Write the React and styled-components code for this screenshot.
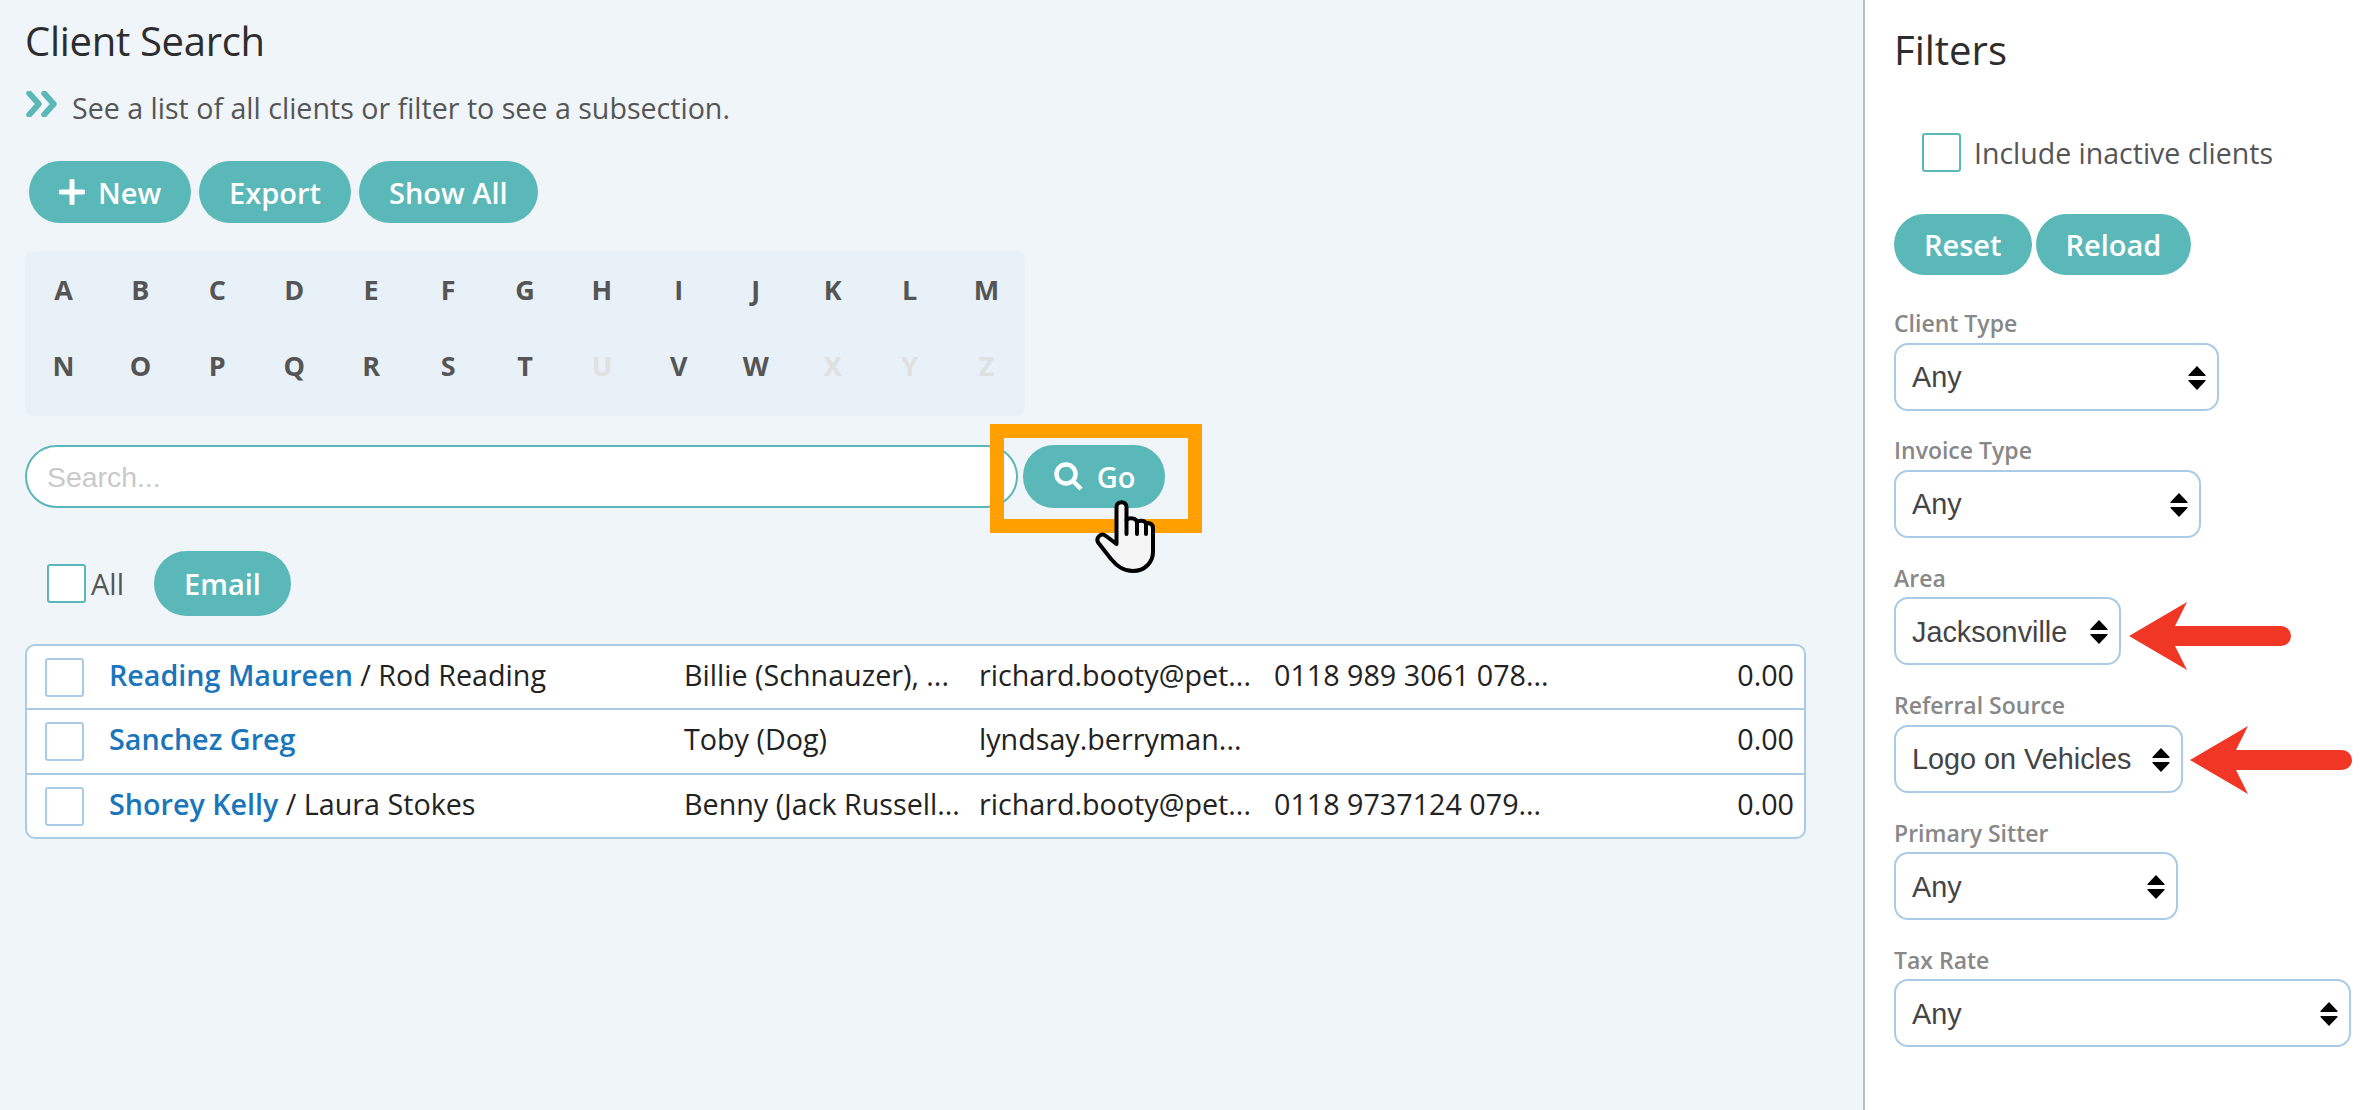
import React from 'react';
import styled, { createGlobalStyle } from 'styled-components';

const teal = '#5bb8b8';
const line = '#a9cbe6';

const alphabet = [
  ['A'], ['B'], ['C'], ['D'], ['E'], ['F'], ['G'], ['H'], ['I'], ['J'], ['K'], ['L'], ['M'],
  ['N'], ['O'], ['P'], ['Q'], ['R'], ['S'], ['T'], ['U', true], ['V'], ['W'], ['X', true], ['Y', true], ['Z', true],
];

const clients = [
  { id: 1, name: 'Reading Maureen', partner: 'Rod Reading', pets: 'Billie (Schnauzer), ...', email: 'richard.booty@pet...', phone: '0118 989 3061 078...' },
  { id: 2, name: 'Sanchez Greg', pets: 'Toby (Dog)', email: 'lyndsay.berryman...', phone: '' },
  { id: 3, name: 'Shorey Kelly', partner: 'Laura Stokes', pets: 'Benny (Jack Russell...', email: 'richard.booty@pet...', phone: '0118 9737124 079...' },
];

const filters = [
  { label: 'Client Type', value: 'Any', width: 325 },
  { label: 'Invoice Type', value: 'Any', width: 307 },
  { label: 'Area', value: 'Jacksonville', width: 227, arrow: { left: 10, top: 3 } },
  { label: 'Referral Source', value: 'Logo on Vehicles', width: 289, arrow: { left: 9, top: -1 } },
  { label: 'Primary Sitter', value: 'Any', width: 284 },
  { label: 'Tax Rate', value: 'Any', width: 457 },
];

function SelectArrows() {
  return (
    <ArrowsIcon viewBox="0 0 18 26">
      <path d="M9 1 L17.5 10 Q18 11 17 11 L1 11 Q0 11 .5 10 Z" />
      <path d="M9 25 L17.5 16 Q18 15 17 15 L1 15 Q0 15 .5 16 Z" />
    </ArrowsIcon>
  );
}

function RedArrow({ left, top }) {
  return (
    <RedArrowIcon $left={left} $top={top} viewBox="0 0 163 68">
      <path d="M0 34 L58 0 L46 24 L152 24 A10 10 0 0 1 152 44 L46 44 L58 68 Z" />
    </RedArrowIcon>
  );
}

function App() {
  return (
    <>
      <GlobalStyle />
      <Page>
        <Main>
          <Title>Client Search</Title>
          <Intro>
            <ChevronIcon viewBox="0 0 30 24">
              <path d="M3 2 L12 12 L3 22" />
              <path d="M17 2 L26 12 L17 22" />
            </ChevronIcon>
            See a list of all clients or filter to see a subsection.
          </Intro>
          <Toolbar>
            <Button>
              <PlusIcon viewBox="0 0 26 26">
                <path d="M13 2 V24 M2 13 H24" />
              </PlusIcon>
              New
            </Button>
            <Button>Export</Button>
            <Button>Show All</Button>
          </Toolbar>
          <Alphabet>
            {alphabet.map(([letter, disabled]) => (
              <Letter key={letter} $disabled={disabled}>{letter}</Letter>
            ))}
          </Alphabet>
          <SearchRow>
            <SearchInput placeholder="Search..." />
            <GoWrap>
              <Highlight />
              <GoButton>
                <SearchIcon viewBox="0 0 32 32">
                  <circle cx="13" cy="13" r="9.5" />
                  <path d="M20 20 L28 28" />
                </SearchIcon>
                Go
              </GoButton>
              <HandIcon viewBox="0 0 60 76">
                <path d="M21.5 46 V9 C21.5 2.5 31.5 2.5 31.5 9 V22 C34 19.5 41 19.5 42 24 C44 22 50 22 51 25.5 C53 24.5 58 25.5 58 30 V54 C58 64 50 73 38 73 C28 73 22 68 16 61 L3.5 45 C0 40 6 34 11 38 Z" />
                <path d="M31.5 22 V36 M42 24 V36 M51 25.5 V36" />
              </HandIcon>
            </GoWrap>
          </SearchRow>
          <SelectRow>
            <TealCheck type="checkbox" />
            <AllLabel>All</AllLabel>
            <EmailButton>Email</EmailButton>
          </SelectRow>
          <ClientList>
            {clients.map((client) => (
              <ClientRow key={client.id}>
                <RowCheck type="checkbox" />
                <Cell>
                  <ClientName>{client.name}</ClientName>
                  {client.partner && ` / ${client.partner}`}
                </Cell>
                <Cell>{client.pets}</Cell>
                <Cell>{client.email}</Cell>
                <Cell>{client.phone}</Cell>
                <Amount>0.00</Amount>
              </ClientRow>
            ))}
          </ClientList>
        </Main>
        <Sidebar>
          <SideTitle>Filters</SideTitle>
          <InactiveRow>
            <TealCheck type="checkbox" />
            Include inactive clients
          </InactiveRow>
          <SideButtons>
            <SideButton>Reset</SideButton>
            <SideButton>Reload</SideButton>
          </SideButtons>
          {filters.map((filter) => (
            <Field key={filter.label}>
              <FieldLabel>{filter.label}</FieldLabel>
              <SelectBox $width={filter.width}>
                {filter.value}
                <SelectArrows />
                {filter.arrow && <RedArrow {...filter.arrow} />}
              </SelectBox>
            </Field>
          ))}
        </Sidebar>
      </Page>
    </>
  );
}

const GlobalStyle = createGlobalStyle`
  html, body {
    margin: 0;
    padding: 0;
  }
  body {
    font-family: 'Open Sans', 'Liberation Sans', sans-serif;
    background-color: #f0f5fa;
    color: #222;
  }
  * {
    box-sizing: border-box;
  }
`;

const Page = styled.div`
  display: flex;
  width: 2368px;
  height: 1110px;
  overflow: hidden;
`;

const Main = styled.div`
  width: 1863px;
  flex-shrink: 0;
  display: flex;
  flex-direction: column;
  align-items: flex-start;
  padding-top: 16px;
  background-color: #f0f5fa;
`;

const Title = styled.h1`
  margin: 0 0 0 25px;
  font-size: 40px;
  line-height: 50px;
  font-weight: 400;
  letter-spacing: -0.3px;
  color: #2d2d2d;
`;

const Intro = styled.div`
  display: flex;
  align-items: center;
  margin: 20px 0 0 26px;
  height: 42px;
  font-size: 28.6px;
  color: #555;
`;

const ChevronIcon = styled.svg`
  width: 32px;
  height: 26px;
  margin-right: 14px;
  margin-top: -7px;
  fill: none;
  stroke: ${teal};
  stroke-width: 5.5;
  stroke-linecap: round;
  stroke-linejoin: round;
`;

const Toolbar = styled.div`
  display: flex;
  gap: 8px;
  margin: 33px 0 0 29px;
`;

const Button = styled.button`
  display: inline-flex;
  align-items: center;
  justify-content: center;
  height: 62px;
  padding: 0 30px;
  border: none;
  border-radius: 31px;
  background-color: ${teal};
  color: #fff;
  font-family: inherit;
  font-size: 29px;
  font-weight: 600;
  white-space: nowrap;
`;

const PlusIcon = styled.svg`
  width: 26px;
  height: 26px;
  margin-right: 13px;
  fill: none;
  stroke: #fff;
  stroke-width: 5;
  stroke-linecap: round;
`;

const Alphabet = styled.div`
  display: grid;
  grid-template-columns: repeat(13, 1fr);
  grid-auto-rows: 76px;
  width: 1000px;
  height: 165px;
  margin: 28px 0 0 25px;
  border-radius: 8px;
  background-color: #e9f1f8;
`;

const Letter = styled.div`
  display: flex;
  align-items: center;
  justify-content: center;
  font-size: 27px;
  font-weight: 700;
  color: ${({ $disabled }) => ($disabled ? '#dfe0e0' : '#555')};
`;

const SearchRow = styled.div`
  display: flex;
  margin: 29px 0 0 25px;
`;

const SearchInput = styled.input`
  width: 993px;
  height: 63px;
  padding: 1px 20px 0;
  border: 2px solid ${teal};
  border-radius: 32px;
  background-color: #fff;
  font-family: 'Liberation Sans', sans-serif;
  font-size: 28.4px;
  outline: none;
  &::placeholder {
    color: #c9c9c9;
  }
`;

const GoWrap = styled.div`
  position: relative;
  margin-left: 5px;
`;

const Highlight = styled.div`
  position: absolute;
  top: -21px;
  left: -33px;
  right: -37px;
  bottom: -25px;
  border-style: solid;
  border-width: 14px;
  border-color: #ffa000;
`;

const GoButton = styled(Button)`
  position: relative;
  width: 142px;
  height: 63px;
  padding: 0;
`;

const SearchIcon = styled.svg`
  width: 32px;
  height: 32px;
  margin-right: 12px;
  fill: none;
  stroke: #fff;
  stroke-width: 4.5;
`;

const HandIcon = styled.svg`
  position: absolute;
  left: 72px;
  top: 53px;
  width: 60px;
  height: 76px;
  fill: #f5f5f5;
  stroke: #000;
  stroke-width: 4;
  stroke-linejoin: round;
  stroke-linecap: round;
`;

const SelectRow = styled.div`
  display: flex;
  align-items: center;
  margin: 43px 0 0 47px;
`;

const Checkbox = styled.input`
  appearance: none;
  flex-shrink: 0;
  width: 39px;
  height: 39px;
  margin: 0;
  border-radius: 3px;
  background-color: #fff;
`;

const TealCheck = styled(Checkbox)`
  border: 2px solid ${teal};
`;

const RowCheck = styled(Checkbox)`
  border: 2px solid ${line};
`;

const AllLabel = styled.span`
  margin-left: 5px;
  font-size: 29px;
  color: #555;
`;

const EmailButton = styled(Button)`
  height: 65px;
  width: 137px;
  margin-left: 30px;
  padding: 0;
  border-radius: 33px;
`;

const ClientList = styled.div`
  width: 1781px;
  margin: 28px 0 0 25px;
  border: 2px solid ${line};
  border-radius: 10px;
  background-color: #fff;
`;

const ClientRow = styled.div`
  display: grid;
  grid-template-columns: 64px 575px 295px 295px 1fr 100px;
  align-items: center;
  height: 65px;
  padding: 0 10px 0 18px;
  border-bottom: 2px solid ${line};
  font-size: 28.7px;
  &:first-child {
    height: 64px;
  }
  &:last-child {
    height: 62px;
    border-bottom: none;
  }
`;

const Cell = styled.div`
  padding-bottom: 6px;
  white-space: nowrap;
  overflow: hidden;
  color: #222;
`;

const ClientName = styled.a`
  font-weight: 600;
  color: #1a75bb;
`;

const Amount = styled(Cell)`
  text-align: right;
`;

const Sidebar = styled.div`
  flex: 1;
  display: flex;
  flex-direction: column;
  align-items: flex-start;
  padding: 24px 0 0 29px;
  border-left: 2px solid #b9c0c5;
  background-color: #fff;
`;

const SideTitle = styled.h2`
  margin: 0;
  font-size: 40px;
  line-height: 52px;
  font-weight: 400;
  color: #2d2d2d;
`;

const InactiveRow = styled.label`
  display: flex;
  align-items: center;
  gap: 13px;
  margin: 57px 0 0 28px;
  font-size: 28.5px;
  color: #555;
`;

const SideButtons = styled.div`
  display: flex;
  gap: 4px;
  margin-top: 42px;
  margin-bottom: 33px;
`;

const SideButton = styled(Button)`
  height: 61px;
`;

const Field = styled.div`
  display: flex;
  flex-direction: column;
  align-items: flex-start;
  height: 127.4px;
`;

const FieldLabel = styled.div`
  height: 34.5px;
  font-size: 23px;
  line-height: 30px;
  font-weight: 600;
  color: #888;
`;

const SelectBox = styled.div`
  position: relative;
  display: flex;
  align-items: center;
  justify-content: space-between;
  width: ${({ $width }) => $width}px;
  height: 68px;
  padding: 2px 11px 0 16px;
  border: 2px solid ${line};
  border-radius: 14px;
  background-color: #fff;
  font-family: 'Liberation Sans', sans-serif;
  font-size: 28.8px;
  color: #444;
`;

const ArrowsIcon = styled.svg`
  width: 18px;
  height: 26px;
  fill: #000;
`;

const RedArrowIcon = styled.svg`
  position: absolute;
  left: calc(100% + ${({ $left }) => $left}px);
  top: ${({ $top }) => $top}px;
  width: 163px;
  height: 68px;
  fill: #f03725;
`;

export default App;
